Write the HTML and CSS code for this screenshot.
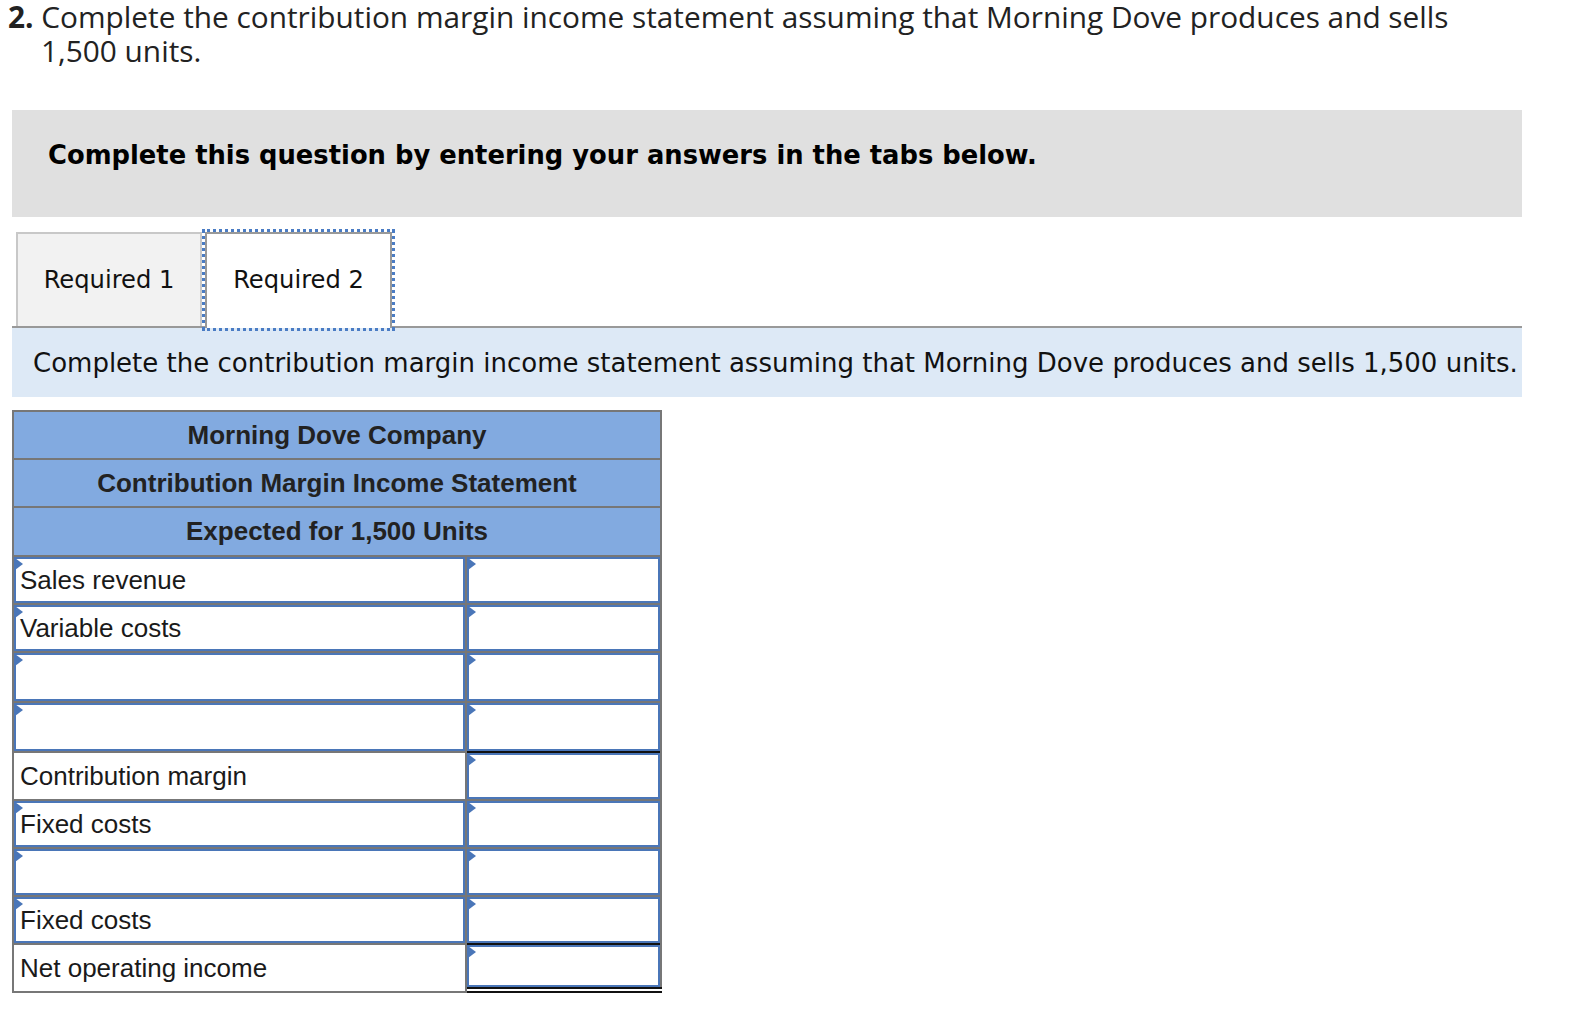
FILE: index.html
```html
<!DOCTYPE html>
<html lang="en">
<head>
<meta charset="utf-8">
<title>Required 2</title>
<link rel="stylesheet" href="styles.css">
</head>
<body>
<div class="page">
  <p class="question"><b>2.</b> Complete the contribution margin income statement assuming that Morning Dove produces and sells<br>1,500 units.</p>

  <div class="instr">Complete this question by entering your answers in the tabs below.</div>

  <div class="tabs">
    <div class="tab">Required 1</div>
    <div class="tab active">Required 2</div>
  </div>

  <div class="prompt">Complete the contribution margin income statement assuming that Morning Dove produces and sells 1,500 units.</div>

  <div class="stmt">
    <div class="hd">Morning Dove Company</div>
    <div class="hd">Contribution Margin Income Statement</div>
    <div class="hd">Expected for 1,500 Units</div>

    <div class="cell"><div class="inp drop">Sales revenue</div></div>
    <div class="cell"><div class="inp drop"></div></div>

    <div class="cell"><div class="inp drop">Variable costs</div></div>
    <div class="cell"><div class="inp drop"></div></div>

    <div class="cell"><div class="inp drop"></div></div>
    <div class="cell"><div class="inp drop"></div></div>

    <div class="cell"><div class="inp drop"></div></div>
    <div class="cell"><div class="inp drop"></div></div>

    <div class="cell plain">Contribution margin</div>
    <div class="cell total"><div class="inp drop"></div></div>

    <div class="cell"><div class="inp drop">Fixed costs</div></div>
    <div class="cell"><div class="inp drop"></div></div>

    <div class="cell"><div class="inp drop"></div></div>
    <div class="cell"><div class="inp drop"></div></div>

    <div class="cell"><div class="inp drop">Fixed costs</div></div>
    <div class="cell"><div class="inp drop"></div></div>

    <div class="cell plain">Net operating income</div>
    <div class="cell total final"><div class="inp drop"></div></div>
  </div>

  <div class="btns">
    <div class="btn prev"></div>
    <div class="btn next"></div>
  </div>
</div>
</body>
</html>
```

FILE: styles.css
```css
html, body {
  margin: 0;
  padding: 0;
  background: #ffffff;
}

.page {
  width: 1596px;
  height: 1014px;
  overflow: hidden;
  color: #1a1a1a;
}

.question {
  margin: 0;
  padding: 0 0 0 41px;
  text-indent: -33px;
  font-family: "Open Sans", "Lato", sans-serif;
  font-size: 29.8px;
  line-height: 34px;
  color: #222222;
}

.question b {
  font-weight: bold;
}

.instr {
  margin: 42px 0 0 12px;
  width: 1510px;
  height: 107px;
  box-sizing: border-box;
  padding: 29px 0 0 36px;
  background: #e0e0e0;
  font-family: "DejaVu Sans", Verdana, sans-serif;
  font-weight: bold;
  font-size: 25.8px;
  line-height: 32px;
  color: #000;
}

.tabs {
  display: flex;
  gap: 3px;
  margin: 15px 0 0 12px;
  width: 1510px;
  box-sizing: border-box;
  padding-left: 4px;
  border-bottom: 2px solid #999999;
  height: 96px;
}

.tab {
  box-sizing: border-box;
  width: 186px;
  height: 94px;
  border: 2px solid #c8c8c8;
  border-bottom: none;
  background: #f2f2f2;
  display: flex;
  align-items: center;
  justify-content: center;
  font-family: "DejaVu Sans", Verdana, sans-serif;
  font-size: 24.2px;
  color: #111;
}

.tab.active {
  width: 187px;
  height: 96px;
  border-color: #999999;
  background: #ffffff;
  margin-bottom: -2px;
  outline: 3px dotted #4a7cc4;
  outline-offset: 0;
  padding-bottom: 2px;
}

.prompt {
  margin: 0 0 0 12px;
  width: 1510px;
  height: 69px;
  box-sizing: border-box;
  padding-left: 21px;
  background: #dde9f6;
  display: flex;
  align-items: center;
  font-family: "DejaVu Sans", Verdana, sans-serif;
  font-size: 26px;
  color: #111;
  white-space: nowrap;
}

.stmt {
  display: grid;
  grid-template-columns: 451px 193px;
  grid-template-rows: 46px 46px 47px 46px 46px 48px 48px 46px 46px 46px 46px 46px;
  gap: 2px;
  width: max-content;
  margin: 13px 0 0 12px;
  background: #777777;
  border: 2px solid #777777;
  font-family: "Liberation Sans", Arial, sans-serif;
  font-size: 26px;
  color: #1a1a1a;
}

.hd {
  grid-column: 1 / -1;
  background: #82aae0;
  display: flex;
  align-items: center;
  justify-content: center;
  font-weight: bold;
  color: #222;
}

.cell {
  background: #ffffff;
  display: flex;
  position: relative;
}

.cell.plain {
  align-items: center;
  padding-left: 6px;
}

.inp {
  flex: 1;
  border: 2px solid #4a76b8;
  display: flex;
  align-items: center;
  padding-left: 4px;
  position: relative;
}

.inp.drop::before {
  content: "";
  position: absolute;
  left: -1px;
  top: -1px;
  width: 0;
  height: 0;
  border-left: 8px solid #4a76b8;
  border-top: 6px solid transparent;
  border-bottom: 6px solid transparent;
}

.cell.total::before {
  content: "";
  position: absolute;
  left: 0;
  right: 0;
  top: -2px;
  height: 2px;
  background: #111111;
}

.cell.final {
  padding-bottom: 4px;
}

.cell.final::after {
  content: "";
  position: absolute;
  left: 0;
  right: -2px;
  bottom: -2px;
  height: 2px;
  border-top: 2px solid #111111;
  border-bottom: 2px solid #111111;
  background: #ffffff;
}

.btns {
  display: flex;
  gap: 41px;
  margin: 21px 0 0 496px;
}

.btn {
  width: 329px;
  height: 44px;
  border-radius: 5px;
}

.btn.prev {
  background: #4a76b8;
}

.btn.next {
  background: #dde6ef;
}
```
